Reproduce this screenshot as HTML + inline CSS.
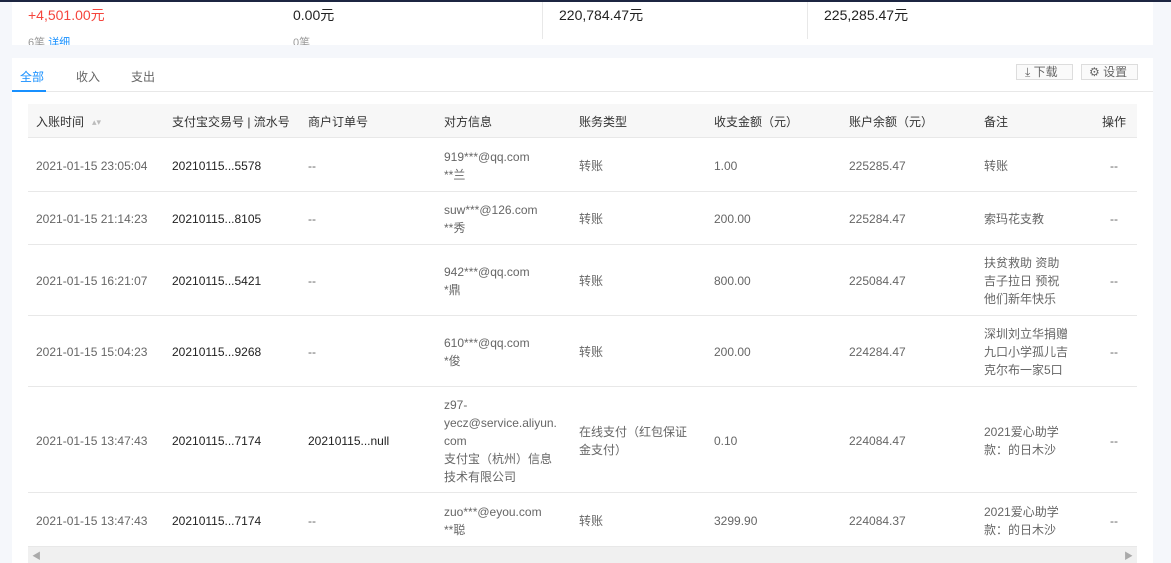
<!DOCTYPE html><html><head><meta charset="utf-8"><style>
*{margin:0;padding:0;box-sizing:border-box}
body{width:1171px;height:563px;overflow:hidden;background:#f5f7fb;font-family:"Liberation Sans","Noto Sans CJK SC",sans-serif;color:#666;font-size:12px;position:relative}
.abs{position:absolute}
.card{background:#fff}
.row{position:absolute;left:28px;width:1109px;border-bottom:1px solid #e8e8e8;background:#fff}
.c{position:absolute;top:0;height:100%;display:flex;align-items:center;line-height:18px;word-break:break-all;padding-top:2px}
</style></head><body>
<div class="abs" style="left:0;top:0;width:1171px;height:2px;background:#1c2541"></div>
<div class="abs card" style="left:12px;top:2px;width:1141px;height:43px;overflow:hidden">
<div class="abs" style="left:16px;top:3px;font-size:14px;color:#f5453d">+4,501.00元</div>
<div class="abs" style="left:16px;top:32px;font-size:11px;color:#999">6笔 <span style="color:#1890ff">详细</span></div>
<div class="abs" style="left:281px;top:3px;font-size:14px;color:#222">0.00元</div>
<div class="abs" style="left:281px;top:32px;font-size:11px;color:#999">0笔</div>
<div class="abs" style="left:530px;top:0;width:1px;height:37px;background:#e8e8e8"></div>
<div class="abs" style="left:547px;top:3px;font-size:14px;color:#222">220,784.47元</div>
<div class="abs" style="left:795px;top:0;width:1px;height:37px;background:#e8e8e8"></div>
<div class="abs" style="left:812px;top:3px;font-size:14px;color:#222">225,285.47元</div>
</div>
<div class="abs card" style="left:12px;top:58px;width:1141px;height:505px"></div>
<div class="abs" style="left:12px;top:91px;width:1141px;height:1px;background:#e8e8e8"></div>
<div class="abs" style="left:12px;top:90px;width:34px;height:2px;background:#1890ff"></div>
<div class="abs" style="left:20px;top:68px;font-size:12px;color:#1890ff">全部</div>
<div class="abs" style="left:76px;top:68px;color:#666">收入</div>
<div class="abs" style="left:131px;top:68px;color:#666">支出</div>
<div class="abs" style="left:1016px;top:64px;width:57px;height:16px;border:1px solid #ddd;background:#fafafa;font-size:12px;line-height:14px;padding-left:8px;color:#666">⤓ 下载</div>
<div class="abs" style="left:1081px;top:64px;width:57px;height:16px;border:1px solid #ddd;background:#fafafa;font-size:12px;line-height:14px;padding-left:7px;color:#666">⚙ 设置</div>
<div class="row" style="top:104px;height:34px;background:#f7f7f7;color:#333">
<div class="c" style="left:8px">入账时间 <span style="color:#bbb;font-size:9px;margin-left:8px">▴▾</span></div>
<div class="c" style="left:144px">支付宝交易号 | 流水号</div>
<div class="c" style="left:280px">商户订单号</div>
<div class="c" style="left:416px">对方信息</div>
<div class="c" style="left:551px">账务类型</div>
<div class="c" style="left:686px">收支金额（元）</div>
<div class="c" style="left:821px">账户余额（元）</div>
<div class="c" style="left:956px">备注</div>
<div class="c" style="left:1074px">操作</div>
</div>
<div class="row" style="top:138px;height:54px"><div class="c" style="left:8px">2021-01-15 23:05:04</div><div class="c" style="left:144px;color:#222">20210115...5578</div><div class="c" style="left:280px">--</div><div class="c" style="left:416px;width:120px">919***@qq.com<br>**兰</div><div class="c" style="left:551px">转账</div><div class="c" style="left:686px">1.00</div><div class="c" style="left:821px">225285.47</div><div class="c" style="left:956px">转账</div><div class="c" style="left:1082px">--</div></div>
<div class="row" style="top:192px;height:53px"><div class="c" style="left:8px">2021-01-15 21:14:23</div><div class="c" style="left:144px;color:#222">20210115...8105</div><div class="c" style="left:280px">--</div><div class="c" style="left:416px;width:120px">suw***@126.com<br>**秀</div><div class="c" style="left:551px">转账</div><div class="c" style="left:686px">200.00</div><div class="c" style="left:821px">225284.47</div><div class="c" style="left:956px">索玛花支教</div><div class="c" style="left:1082px">--</div></div>
<div class="row" style="top:245px;height:71px"><div class="c" style="left:8px">2021-01-15 16:21:07</div><div class="c" style="left:144px;color:#222">20210115...5421</div><div class="c" style="left:280px">--</div><div class="c" style="left:416px;width:120px">942***@qq.com<br>*鼎</div><div class="c" style="left:551px">转账</div><div class="c" style="left:686px">800.00</div><div class="c" style="left:821px">225084.47</div><div class="c" style="left:956px;width:80px">扶贫救助 资助吉子拉日 预祝他们新年快乐</div><div class="c" style="left:1082px">--</div></div>
<div class="row" style="top:316px;height:71px"><div class="c" style="left:8px">2021-01-15 15:04:23</div><div class="c" style="left:144px;color:#222">20210115...9268</div><div class="c" style="left:280px">--</div><div class="c" style="left:416px;width:120px">610***@qq.com<br>*俊</div><div class="c" style="left:551px">转账</div><div class="c" style="left:686px">200.00</div><div class="c" style="left:821px">224284.47</div><div class="c" style="left:956px;width:86px">深圳刘立华捐赠九口小学孤儿吉克尔布一家5口</div><div class="c" style="left:1082px">--</div></div>
<div class="row" style="top:387px;height:106px"><div class="c" style="left:8px">2021-01-15 13:47:43</div><div class="c" style="left:144px;color:#222">20210115...7174</div><div class="c" style="left:280px;color:#222">20210115...null</div><div class="c" style="left:416px;width:118px">z97-<br>yecz@service.aliyun.com<br>支付宝（杭州）信息<br>技术有限公司</div><div class="c" style="left:551px;width:118px">在线支付（红包保证金支付）</div><div class="c" style="left:686px">0.10</div><div class="c" style="left:821px">224084.47</div><div class="c" style="left:956px;width:84px">2021爱心助学款：的日木沙</div><div class="c" style="left:1082px">--</div></div>
<div class="row" style="top:493px;height:54px"><div class="c" style="left:8px">2021-01-15 13:47:43</div><div class="c" style="left:144px;color:#222">20210115...7174</div><div class="c" style="left:280px">--</div><div class="c" style="left:416px;width:120px">zuo***@eyou.com<br>**聪</div><div class="c" style="left:551px">转账</div><div class="c" style="left:686px">3299.90</div><div class="c" style="left:821px">224084.37</div><div class="c" style="left:956px;width:84px">2021爱心助学款：的日木沙</div><div class="c" style="left:1082px">--</div></div>
<div class="abs" style="left:28px;top:547px;width:1109px;height:16px;background:#f0f0f0"><span class="abs" style="left:4px;top:2px;font-size:9px;color:#aaa">◀</span><span class="abs" style="right:4px;top:2px;font-size:9px;color:#aaa">▶</span></div>
</body></html>
